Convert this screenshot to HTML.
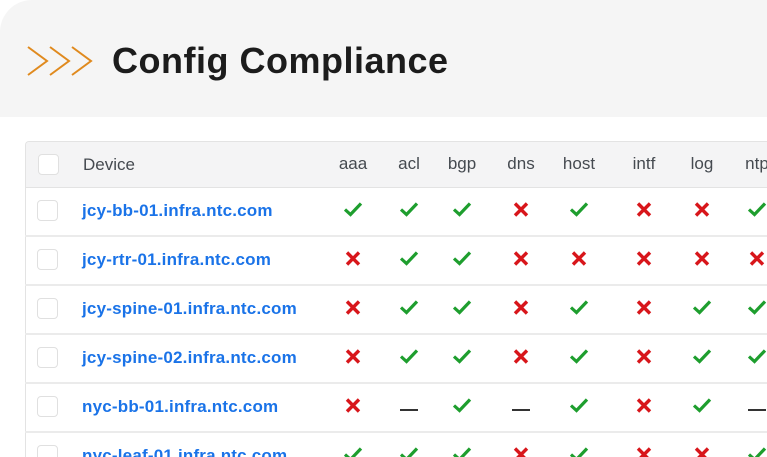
<!DOCTYPE html>
<html><head><style>
*{margin:0;padding:0;box-sizing:border-box}
html,body{width:767px;height:457px;overflow:hidden}
body{background:#fff;font-family:"Liberation Sans",sans-serif;position:relative}
.band{position:absolute;left:0;top:0;width:767px;height:117px;background:#f5f5f5;border-top-left-radius:32px}
h1{position:absolute;left:112px;top:40px;font-size:36px;font-weight:bold;color:#1c1c1c;letter-spacing:0.5px}
.tbl{position:absolute;left:25px;top:141px;width:742px;height:316px;border:1px solid #e3e3e3;border-right:none;border-bottom:none;border-radius:4px 0 0 0;overflow:hidden}
.hdr{position:absolute;left:0;top:0;width:100%;height:46px;background:#f4f4f5;border-bottom:1px solid #e3e3e3}
.row{position:absolute;height:49px;border-bottom:2px solid #ebebeb}
.cb{position:absolute;left:12px;width:21px;height:21px;border:1px solid #e0e0e0;border-radius:4px;background:#fff}
.t{position:absolute;font-size:17px;color:#454a50;transform:translateX(-50%)}
.dev{position:absolute;left:57px;font-size:17px;font-weight:bold;color:#1a73e8;letter-spacing:0.2px;white-space:nowrap}
.ic{position:absolute;transform:translate(-50%,-50%)}
#c{position:absolute;left:0;top:0;width:767px;height:457px;overflow:hidden}
</style></head><body>
<div class="band"></div>
<svg style="position:absolute;left:27px;top:46px" width="68" height="30" viewBox="0 0 68 30" fill="none" stroke="#e08a1e" stroke-width="2"><path d="M1 1 L20 15 L1 29 M23 1 L42 15 L23 29 M45 1 L64 15 L45 29"/></svg>
<h1>Config Compliance</h1>
<div class="tbl">
<div class="hdr"><div class="cb" style="top:12px"></div>
<div style="position:absolute;left:57px;top:13px;font-size:17px;color:#454a50">Device</div>
</div>
</div>
<div id="c"></div>
<script>
const cols=[353,409,462,521,579,644,702,757],names=["aaa","acl","bgp","dns","host","intf","log","ntp"];
const rows=[["jcy-bb-01.infra.ntc.com","yyynynny"],["jcy-rtr-01.infra.ntc.com","nyynnnnn"],["jcy-spine-01.infra.ntc.com","nyynynyy"],["jcy-spine-02.infra.ntc.com","nyynynyy"],["nyc-bb-01.infra.ntc.com","n-y-yny-"],["nyc-leaf-01.infra.ntc.com","yyynynny"]];
let h="";
cols.forEach((x,i)=>h+=`<div class="t" style="left:${x}px;top:154px">${names[i]}</div>`);
const Y='<svg width="20" height="16" viewBox="0 0 20 16"><path d="M2 8 L7.5 13 L18 2" fill="none" stroke="#1e9e2e" stroke-width="3.2"/></svg>';
const N='<svg width="16" height="16" viewBox="0 0 16 16"><path d="M2 2 L14 14 M14 2 L2 14" stroke="#d8161b" stroke-width="3.4"/></svg>';
const D='<svg width="18" height="4"><rect y="1" width="18" height="2" fill="#333"/></svg>';
rows.forEach((r,k)=>{const top=188+k*49;
h+=`<div class="row" style="left:25px;top:${top}px;width:742px"><div class="cb" style="top:12px"></div><div class="dev" style="top:13px">${r[0]}</div></div>`;
[...r[1]].forEach((c,i)=>h+=`<div class="ic" style="left:${cols[i]}px;top:${top+24}px">${c=='y'?Y:c=='n'?N:D}</div>`);});
document.getElementById('c').innerHTML=h;
</script>
</body></html>
